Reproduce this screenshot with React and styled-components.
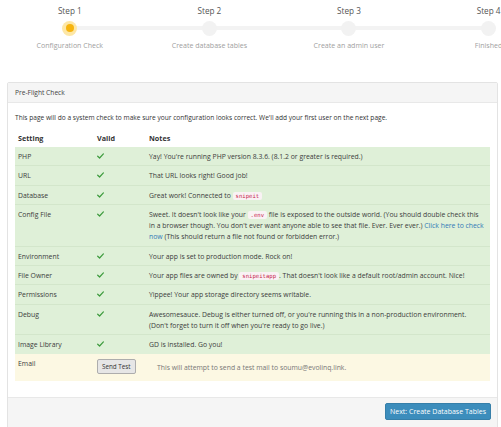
import styled, { createGlobalStyle, css } from "styled-components";

const GlobalStyle = createGlobalStyle`
  html, body {
    margin: 0;
    padding: 0;
    background: #fff;
    overflow: hidden;
  }
  body {
    font-family: "Open Sans", "Noto Sans", sans-serif;
    color: #333;
  }
`;

const steps = [
  { title: "Step 1", label: "Configuration Check", active: true },
  { title: "Step 2", label: "Create database tables" },
  { title: "Step 3", label: "Create an admin user" },
  { title: "Step 4", label: "Finished" },
];

// built at render time so the styled parts below are defined
const getRows = () => [
  { setting: "PHP", notes: <>Yay! You're running PHP version 8.3.6. (8.1.2 or greater is required.)</> },
  { setting: "URL", notes: <>That URL looks right! Good job!</> },
  { setting: "Database", notes: <>Great work! Connected to <Code>snipeit</Code></> },
  {
    setting: "Config File",
    notes: (
      <Lines>
        Sweet. It doesn't look like your <Code>.env</Code> file is exposed to the outside world. (You should double check this
        <br />
        in a browser though. You don't ever want anyone able to see that file. Ever. Ever ever.) <Link href="#">Click here to check</Link>
        <br />
        <Link href="#">now</Link> (This should return a file not found or forbidden error.)
      </Lines>
    ),
  },
  { setting: "Environment", notes: <>Your app is set to production mode. Rock on!</> },
  { setting: "File Owner", notes: <Lines>Your app files are owned by <Code>snipeitapp</Code>. That doesn't look like a default root/admin account. Nice!</Lines> },
  { setting: "Permissions", notes: <>Yippee! Your app storage directory seems writable.</> },
  {
    setting: "Debug",
    notes: (
      <Lines>
        Awesomesauce. Debug is either turned off, or you're running this in a non-production environment.
        <br />
        (Don't forget to turn it off when you're ready to go live.)
      </Lines>
    ),
  },
  { setting: "Image Library", notes: <>GD is installed. Go you!</> },
];

function Check() {
  return (
    <svg width="7" height="6" viewBox="0 0 7 6">
      <path d="M0.7 3.2 L2.6 5 L6.4 0.9" fill="none" stroke="#3c9a3c" strokeWidth="1.2" strokeLinecap="round" strokeLinejoin="round" />
    </svg>
  );
}

export default function App() {
  const rows = getRows();
  return (
    <Page>
      <GlobalStyle />
      <Stepper>
        {steps.map((s, i) => (
          <Step key={s.title}>
            <StepTitle>{s.title}</StepTitle>
            <DotRow $first={i === 0} $last={i === steps.length - 1}>
              <Dot $active={s.active} />
            </DotRow>
            <StepLabel>{s.label}</StepLabel>
          </Step>
        ))}
      </Stepper>

      <Card>
        <CardHeader>Pre-Flight Check</CardHeader>
        <CardBody>
          <Intro>
            This page will do a system check to make sure your configuration looks correct. We'll add your first user on the next page.
          </Intro>
          <Table>
            <colgroup>
              <col style={{ width: 79 }} />
              <col style={{ width: 52 }} />
              <col />
            </colgroup>
            <thead>
              <tr>
                <Th>Setting</Th>
                <Th>Valid</Th>
                <Th>Notes</Th>
              </tr>
            </thead>
            <tbody>
              {rows.map((r) => (
                <Row key={r.setting} $tone="success">
                  <Td>{r.setting}</Td>
                  <Td><Check /></Td>
                  <Td>{r.notes}</Td>
                </Row>
              ))}
              <Row $tone="warning">
                <Td $tall>Email</Td>
                <Td $tall><SendButton>Send Test</SendButton></Td>
                <Td $tall><MailNote>This will attempt to send a test mail to soumu@evolinq.link.</MailNote></Td>
              </Row>
            </tbody>
          </Table>
        </CardBody>
        <CardFooter>
          <PrimaryButton>Next: Create Database Tables</PrimaryButton>
        </CardFooter>
      </Card>
    </Page>
  );
}

const Page = styled.div`
  width: 501px;
  height: 427px;
  overflow: hidden;
`;

const Stepper = styled.div`
  display: grid;
  grid-template-columns: repeat(4, 139.6px);
  width: 560px;
  padding-top: 5px;
`;

const Step = styled.div`
  display: flex;
  flex-direction: column;
  align-items: center;
`;

const StepTitle = styled.div`
  font-size: 8.2px;
  line-height: 12px;
  color: #555;
`;

const DotRow = styled.div`
  position: relative;
  width: 100%;
  height: 16px;
  margin-top: 3px;
  display: flex;
  justify-content: center;
  align-items: center;

  &::before,
  &::after {
    content: "";
    position: absolute;
    top: 6px;
    height: 4px;
    width: 50%;
    background: #f3f3f3;
  }
  &::before {
    left: 0;
    ${(p) => p.$first && css`display: none;`}
  }
  &::after {
    right: 0;
    ${(p) => p.$last && css`display: none;`}
  }
`;

const Dot = styled.span`
  position: relative;
  z-index: 1;
  width: 15px;
  height: 15px;
  border-radius: 50%;
  background: ${(p) => (p.$active ? "#fde7a6" : "#f2f2f2")};

  ${(p) =>
    p.$active &&
    css`
      &::after {
        content: "";
        position: absolute;
        left: 3.5px;
        top: 3.5px;
        width: 8px;
        height: 8px;
        border-radius: 50%;
        background: #f6b40e;
      }
    `}
`;

const StepLabel = styled.div`
  margin-top: 4px;
  font-size: 7.05px;
  line-height: 11px;
  color: #a0a0a0;
  white-space: nowrap;
`;

const Card = styled.div`
  margin: 31px 3px 0 7px;
  border: 1px solid #e3e3e3;
  border-radius: 2px;
  background: #fff;
`;

const CardHeader = styled.div`
  background: #f5f5f5;
  border-bottom: 1px solid #e8e8e8;
  padding: 0 7px;
  height: 19px;
  line-height: 19px;
  font-size: 6.65px;
  color: #444;
`;

const CardBody = styled.div`
  padding: 9px 7px 16px 7px;
`;

const Intro = styled.p`
  margin: 0 0 6px 0;
  font-size: 6.6px;
  line-height: 11px;
  color: #333;
  white-space: nowrap;
`;

const Table = styled.table`
  width: 100%;
  table-layout: fixed;
  border-collapse: collapse;
  font-size: 6.85px;
  line-height: 11px;
`;

const Th = styled.th`
  text-align: left;
  font-weight: 700;
  color: #333;
  padding: 4px 3px 3px 3px;
  font-size: 7.2px;
`;

const Row = styled.tr`
  background: ${(p) => (p.$tone === "warning" ? "#fcf8e3" : "#dff0d8")};
  & + & > td {
    border-top: 1px solid #d3e6cb;
  }
`;

const Td = styled.td`
  vertical-align: top;
  padding: 4px 3px 3.4px 3px;
  color: #3c3c3c;
  ${(p) => p.$tall && css`padding: 4px 3px 7px 3px;`}
`;

const Lines = styled.span`
  white-space: nowrap;
`;

const Code = styled.code`
  font-family: "DejaVu Sans Mono", "Liberation Mono", monospace;
  font-size: 5.6px;
  line-height: 1;
  color: #c7254e;
  background: #f9f2f4;
  border-radius: 2px;
  padding: 1px 3px;
`;

const Link = styled.a`
  color: #337ab7;
  text-decoration: none;
`;

const SendButton = styled.button`
  font-family: inherit;
  font-size: 6.3px;
  color: #333;
  background: #e6e6e6;
  border: 1px solid #adadad;
  border-radius: 2px;
  padding: 0 4px;
  height: 15px;
  margin-top: 1px;
  white-space: nowrap;
`;

const MailNote = styled.span`
  display: inline-block;
  padding-left: 8px;
  padding-top: 4px;
  color: #777;
  white-space: nowrap;
`;

const CardFooter = styled.div`
  background: #f5f5f5;
  border-top: 1px solid #e8e8e8;
  display: flex;
  justify-content: flex-end;
  padding: 5px 6px 8px 6px;
`;

const PrimaryButton = styled.button`
  font-family: inherit;
  font-size: 7px;
  color: #fff;
  background: #3c8dbc;
  border: 1px solid #367fa9;
  border-radius: 2px;
  height: 17px;
  width: 106px;
  padding: 0;
`;
